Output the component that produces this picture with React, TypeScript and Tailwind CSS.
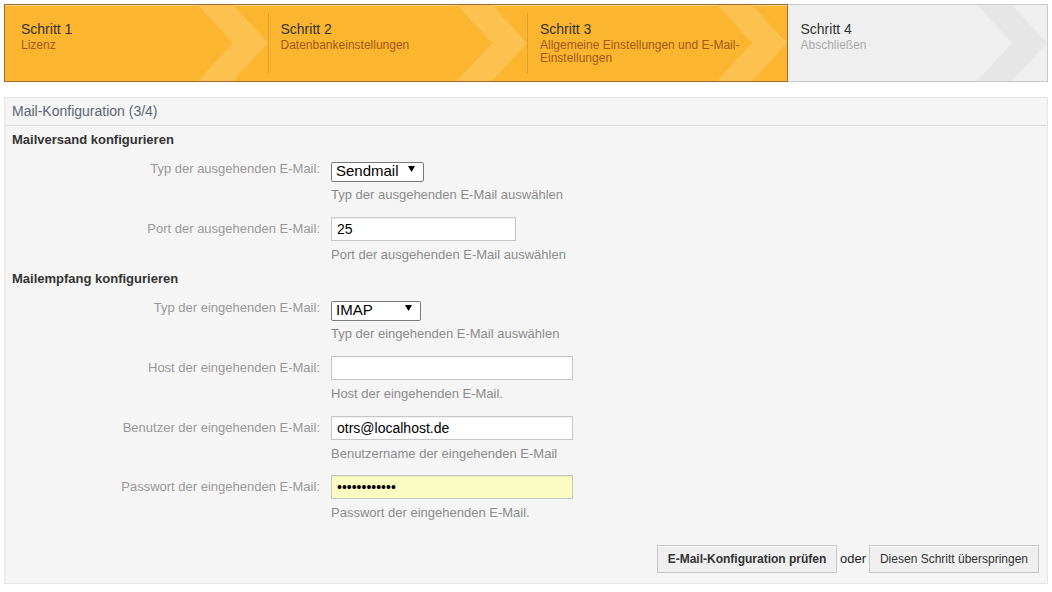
import React from 'react'

const steps = [
  { title: 'Schritt 1', sub: ['Lizenz'], done: true },
  { title: 'Schritt 2', sub: ['Datenbankeinstellungen'], done: true },
  { title: 'Schritt 3', sub: ['Allgemeine Einstellungen und E-Mail-', 'Einstellungen'], done: true },
  { title: 'Schritt 4', sub: ['Abschließen'], done: false },
]

function Chevron({ color }: { color: string }) {
  return (
    <svg
      className="absolute right-0 top-0 h-full w-[70px]"
      viewBox="0 0 70 76"
      preserveAspectRatio="none"
    >
      <polygon points="0,0 35,0 70,38 35,76 0,76 35,38" fill={color} />
    </svg>
  )
}

function StepBar() {
  return (
    <div className="flex h-[78px]">
      {steps.map((s, i) => {
        const first = i === 0
        const lastDone = i === 2
        return (
          <div
            key={s.title}
            className={`relative flex-1 overflow-hidden ${
              s.done
                ? `bg-[#fbb52f] border-y border-[#a36a2e] shadow-[inset_0_1px_0_#fcd98a] ${first ? 'border-l pl-[16px]' : 'pl-[13px]'} ${lastDone ? 'border-r' : ''}`
                : 'bg-[#efefef] border-y border-r border-[#c9c9c9] pl-[13px]'
            } pt-[16px]`}
          >
            <Chevron color={s.done ? '#fcc14f' : '#e6e6e6'} />
            {!first && s.done && (
              <div className="absolute left-0 top-[8px] bottom-[8px] w-px bg-[#dc9f35]" />
            )}
            <div className="relative">
              <div className="text-[14px] leading-[16px] text-[#333]">{s.title}</div>
              <div
                className={`text-[12px] leading-[13px] mt-[2px] ${
                  s.done ? 'text-[#a3591c]' : 'text-[#aaa]'
                }`}
              >
                {s.sub.map((line) => (
                  <div key={line}>{line}</div>
                ))}
              </div>
            </div>
          </div>
        )
      })}
    </div>
  )
}

function Row({
  label,
  help,
  mt,
  helpMt,
  children,
}: {
  label: string
  help: string
  mt: string
  helpMt: string
  children: React.ReactNode
}) {
  return (
    <div className={mt}>
      <div className="flex items-center">
        <label className="w-[326px] shrink-0 pr-[11px] text-right text-[13px] text-[#999]">
          {label}
        </label>
        {children}
      </div>
      <div className={`${helpMt} pl-[326px] text-[13px] leading-[16px] text-[#8c8c8c]`}>{help}</div>
    </div>
  )
}

function FakeSelect({ value, width }: { value: string; width: string }) {
  return (
    <div className={`relative ${width} h-[20px]`}>
      <select
        defaultValue={value}
        className="h-full w-full appearance-none rounded-[2px] border border-[#7a7a7a] bg-white pl-[4px] pb-[2px] text-[15px] leading-[16px] text-black outline-none"
      >
        <option>{value}</option>
      </select>
      <svg
        className="pointer-events-none absolute right-[9px] top-[7px] h-[6px] w-[7px]"
        viewBox="0 0 7 6"
      >
        <polygon points="0,0 7,0 3.5,6" fill="#000" />
      </svg>
    </div>
  )
}

function TextInput({
  value,
  width,
  type = 'text',
  yellow = false,
}: {
  value: string
  width: string
  type?: string
  yellow?: boolean
}) {
  return (
    <input
      type={type}
      defaultValue={value}
      className={`${width} h-[24px] border border-[#c6c6c6] px-[5px] text-[14px] text-black outline-none shadow-[inset_0_1px_1px_rgba(0,0,0,0.06)] ${
        yellow ? 'bg-[#fafcc2]' : 'bg-white'
      }`}
    />
  )
}

export default function App() {
  return (
    <div
      className="min-h-[592px] bg-white p-[4px]"
      style={{ fontFamily: '"Liberation Sans", Arial, sans-serif' }}
    >
      <StepBar />

      <div className="mt-[15px] border border-[#e6e6e6] bg-[#f5f5f5]">
        <div className="flex h-[28px] items-center border-b border-[#dcdcdc] px-[7px] text-[14px] text-[#5b6675]">
          Mail-Konfiguration (3/4)
        </div>

        <div className="pt-[6px] pb-[10px]">
          <h3 className="pl-[7px] text-[13px] font-bold leading-[16px] text-[#333]">
            Mailversand konfigurieren
          </h3>

          <Row
            label="Typ der ausgehenden E-Mail:"
            help="Typ der ausgehenden E-Mail auswählen"
            mt="mt-[11px]"
            helpMt="mt-[8px]"
          >
            <FakeSelect value="Sendmail" width="w-[93px]" />
          </Row>

          <Row
            label="Port der ausgehenden E-Mail:"
            help="Port der ausgehenden E-Mail auswählen"
            mt="mt-[14px]"
            helpMt="mt-[6px]"
          >
            <TextInput value="25" width="w-[185px]" />
          </Row>

          <h3 className="mt-[8px] pl-[7px] text-[13px] font-bold leading-[16px] text-[#333]">
            Mailempfang konfigurieren
          </h3>

          <Row
            label="Typ der eingehenden E-Mail:"
            help="Typ der eingehenden E-Mail auswählen"
            mt="mt-[11px]"
            helpMt="mt-[8px]"
          >
            <FakeSelect value="IMAP" width="w-[90px]" />
          </Row>

          <Row
            label="Host der eingehenden E-Mail:"
            help="Host der eingehenden E-Mail."
            mt="mt-[14px]"
            helpMt="mt-[6px]"
          >
            <TextInput value="" width="w-[242px]" />
          </Row>

          <Row
            label="Benutzer der eingehenden E-Mail:"
            help="Benutzername der eingehenden E-Mail"
            mt="mt-[14px]"
            helpMt="mt-[6px]"
          >
            <TextInput value="otrs@localhost.de" width="w-[242px]" />
          </Row>

          <Row
            label="Passwort der eingehenden E-Mail:"
            help="Passwort der eingehenden E-Mail."
            mt="mt-[13px]"
            helpMt="mt-[6px]"
          >
            <TextInput value="otrspassword" type="password" width="w-[242px]" yellow />
          </Row>

          <div className="mt-[24px] flex items-center justify-end gap-[3px] pr-[8px]">
            <button className="h-[28px] w-[180px] border border-[#c8c8c8] bg-[#efefef] text-[12px] font-bold text-[#333] shadow-[inset_0_1px_0_#fff]">
              E-Mail-Konfiguration prüfen
            </button>
            <span className="text-[13px] text-[#222]">oder</span>
            <button className="h-[28px] w-[170px] border border-[#c8c8c8] bg-[#efefef] text-[12px] text-[#333] shadow-[inset_0_1px_0_#fff]">
              Diesen Schritt überspringen
            </button>
          </div>
        </div>
      </div>
    </div>
  )
}
